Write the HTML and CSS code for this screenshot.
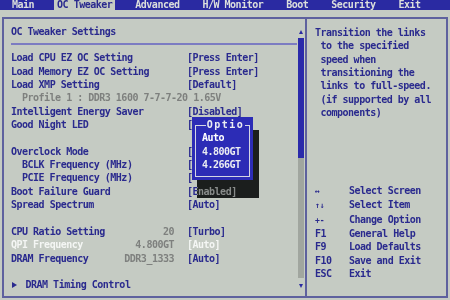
FILE: index.html
```html
<!DOCTYPE html>
<html lang="en">
<head>
	<meta charset="UTF-8">
	<meta name="viewport" content="width=device-width, initial-scale=1.0">
	<title>OC Tweaker</title>
	<link rel="stylesheet" href="styles.css">
</head>
<body>

	<nav class="tabs">
		<span class="tab">Main</span>
		<span class="tab active">OC Tweaker</span>
		<span class="tab">Advanced</span>
		<span class="tab">H/W Monitor</span>
		<span class="tab">Boot</span>
		<span class="tab">Security</span>
		<span class="tab">Exit</span>
	</nav>

	<div class="frame">
		<section class="settings">
			<div class="content">
				<h1 class="title">OC Tweaker Settings</h1>
				<div class="sep"></div>
				<ul class="rows">
					<li class="row"><span class="label">Load CPU EZ OC Setting</span><span class="info"></span><span class="opt">[Press Enter]</span></li>
					<li class="row"><span class="label">Load Memory EZ OC Setting</span><span class="info"></span><span class="opt">[Press Enter]</span></li>
					<li class="row"><span class="label">Load XMP Setting</span><span class="info"></span><span class="opt">[Default]</span></li>
					<li class="note">Profile 1 : DDR3 1600 7-7-7-20 1.65V</li>
					<li class="row"><span class="label">Intelligent Energy Saver</span><span class="info"></span><span class="opt">[Disabled]</span></li>
					<li class="row"><span class="label">Good Night LED</span><span class="info"></span><span class="opt">[</span></li>
					<li class="blank"></li>
					<li class="row"><span class="label">Overclock Mode</span><span class="info"></span><span class="opt">[</span></li>
					<li class="row sub"><span class="label">BCLK Frequency (MHz)</span><span class="info"></span><span class="opt">[</span></li>
					<li class="row sub"><span class="label">PCIE Frequency (MHz)</span><span class="info"></span><span class="opt">[</span></li>
					<li class="row"><span class="label">Boot Failure Guard</span><span class="info"></span><span class="opt">[Enabled]</span></li>
					<li class="row"><span class="label">Spread Spectrum</span><span class="info"></span><span class="opt">[Auto]</span></li>
					<li class="blank"></li>
					<li class="row"><span class="label">CPU Ratio Setting</span><span class="info">20</span><span class="opt">[Turbo]</span></li>
					<li class="row current"><span class="label">QPI Frequency</span><span class="info">4.800GT</span><span class="opt">[Auto]</span></li>
					<li class="row"><span class="label">DRAM Frequency</span><span class="info">DDR3_1333</span><span class="opt">[Auto]</span></li>
					<li class="blank"></li>
					<li class="row submenu">
						<span class="label">
							<svg class="arrow" width="5" height="6" viewBox="0 0 5 6"><path d="M0 0 L5 3 L0 6 Z" fill="#2a2a8e"/></svg>
							DRAM Timing Control
						</span>
					</li>
				</ul>
			</div>
			<div class="scrollbar">
				<span class="tri up"></span>
				<span class="thumb"></span>
				<span class="track"></span>
				<span class="tri down"></span>
			</div>
		</section>

		<aside class="help">
			<p class="help-text">Transition the links<br>to the specified<br>speed when<br>transitioning the<br>links to full-speed.<br>(if supported by all<br>components)</p>
			<dl class="keys">
				<dt><span class="glyph">&harr;</span></dt><dd>Select Screen</dd>
				<dt><span class="glyph">&uarr;&darr;</span></dt><dd>Select Item</dd>
				<dt><span class="glyph">+-</span></dt><dd>Change Option</dd>
				<dt>F1</dt><dd>General Help</dd>
				<dt>F9</dt><dd>Load Defaults</dd>
				<dt>F10</dt><dd>Save and Exit</dd>
				<dt>ESC</dt><dd>Exit</dd>
			</dl>
		</aside>

		<div class="shadow"></div>
		<div class="popup">
			<div class="popup-title"><span>Optio</span></div>
			<ul class="popup-items">
				<li class="picked">Auto</li>
				<li>4.800GT</li>
				<li>4.266GT</li>
			</ul>
		</div>
	</div>

</body>
</html>
```

FILE: styles.css
```css
* {
	margin: 0;
	padding: 0;
	box-sizing: border-box;
}

body {
	background-color: #c5cbc3;
	color: #2a2a8e;
	font-family: "DejaVu Sans Mono", monospace;
	font-weight: bold;
	font-size: 10px;
	letter-spacing: -0.5px;
	line-height: 13.35px;
}

/* top menu bar */
.tabs {
	display: flex;
	gap: 17px;
	height: 10px;
	padding-left: 9px;
	background-color: #2a2aa2;
	color: #dcdfdc;
	line-height: 10px;
}

.tab {
	padding: 0 3px;
}

.tab.active {
	background-color: #c5cbc3;
	color: #2a2a8e;
}

/* main frame */
.frame {
	position: relative;
	display: grid;
	grid-template-columns: 301px 1fr;
	width: 446px;
	height: 281px;
	margin: 7px 0 0 2px;
	border: 2px solid #5e619e;
}

.settings {
	display: grid;
	grid-template-columns: 286px 6px;
	column-gap: 1px;
	padding: 0 1px 0 7px;
}

.content {
	padding-top: 6px;
}

.title {
	font-size: inherit;
	font-weight: inherit;
	line-height: inherit;
}

.sep {
	height: 2px;
	margin: 5px 0 6px;
	background-color: #7c7cc2;
}

.rows {
	list-style: none;
}

.row {
	display: grid;
	grid-template-columns: 1fr auto 110px;
	white-space: nowrap;
}

.row .info {
	margin-right: 13px;
	color: #7e807e;
}

.row.sub .label,
.note {
	padding-left: 11px;
}

.note {
	color: #7e807e;
	white-space: nowrap;
}

.blank {
	height: 13.35px;
}

.row.current .label,
.row.current .opt {
	color: #f4f6f4;
}

.arrow {
	margin: 0 3px 0 1px;
}

/* scroll bar */
.scrollbar {
	display: flex;
	flex-direction: column;
	align-items: center;
	padding-top: 11px;
}

.tri {
	width: 0;
	height: 0;
	border-left: 2.5px solid transparent;
	border-right: 2.5px solid transparent;
}

.tri.up {
	border-bottom: 4px solid #2a2aa2;
}

.tri.down {
	margin-top: 6px;
	border-top: 4px solid #2a2aa2;
}

.thumb {
	width: 6px;
	height: 120px;
	margin-top: 4px;
	background-color: #2a2aaa;
}

.track {
	width: 6px;
	height: 120px;
	background-color: #a1a69f;
}

/* help column */
.help {
	border-left: 2px solid #5e619e;
	padding: 7px 0 0 8px;
}

.help-text {
	padding-left: 5.5px;
	text-indent: -5.5px;
}

.keys {
	display: grid;
	grid-template-columns: 34px 1fr;
	margin-top: 64.5px;
}

.glyph {
	font-size: 8px;
	letter-spacing: 0;
}

/* option popup */
.shadow {
	position: absolute;
	left: 193px;
	top: 111px;
	width: 62px;
	height: 68px;
	backdrop-filter: invert(1) grayscale(1) contrast(1.2) brightness(0.75);
	background-color: rgba(20, 34, 28, 0.2);
}

.popup {
	position: absolute;
	left: 188px;
	top: 98px;
	width: 61px;
	height: 63px;
	padding-top: 1px;
	background-color: #2c2cb6;
	color: #eceef2;
}

.popup::before {
	content: "";
	position: absolute;
	inset: 8px 3px 3px 3px;
	border: 1px solid #d4d6e4;
}

.popup-title {
	position: relative;
	text-align: center;
	padding-left: 6px;
}

.popup-title span {
	padding: 0 1px;
	background-color: #2c2cb6;
	letter-spacing: 1.5px;
}

.popup-items {
	position: relative;
	list-style: none;
	padding-left: 10px;
}

.popup-items .picked {
	color: #ffffff;
}
```
